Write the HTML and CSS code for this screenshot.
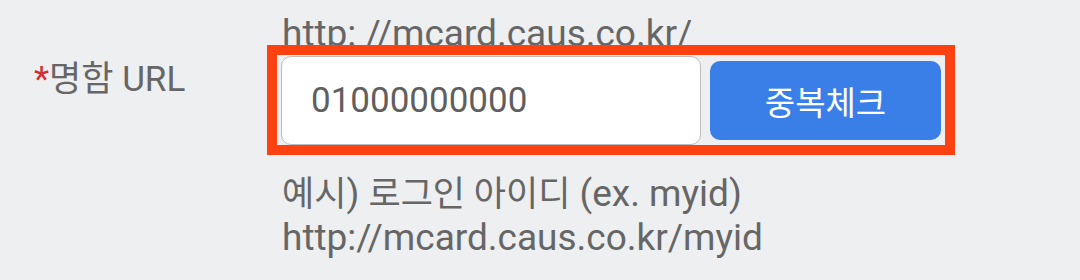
FILE: index.html
```html
<!DOCTYPE html>
<html lang="ko">
<head>
<meta charset="utf-8">
<link rel="stylesheet" href="styles.css">
</head>
<body>
<div class="form-row">
  <div class="label"><span class="req">*</span>명함 URL</div>
  <div class="field">
    <div class="prefix">http: //mcard.caus.co.kr/</div>
    <div class="highlight">
      <input class="url-input" type="text" value="01000000000">
      <button class="check-btn" type="button">중복체크</button>
    </div>
    <div class="hint">
      <div><span class="ko">예시</span>) <span class="ko">로그인 아이디</span> (ex. myid)</div>
      <div>http://mcard.caus.co.kr/myid</div>
    </div>
  </div>
</div>
</body>
</html>
```
FILE: styles.css
```css
html, body {
  margin: 0;
  padding: 0;
}
body {
  background: #eeeff1;
  font-family: Roboto, "Noto Sans CJK KR", sans-serif;
  color: #666666;
  width: 1080px;
  height: 280px;
  overflow: hidden;
}
.form-row {
  display: grid;
  grid-template-columns: 267px 688px;
}
.label {
  padding-left: 34px;
  padding-top: 60px;
  font-size: 35px;
  line-height: 40px;
  color: #666666;
  white-space: nowrap;
}
.req {
  color: #d32f2f;
}
.field {
  display: flex;
  flex-direction: column;
  padding-top: 22px;
}
.prefix {
  padding-left: 15px;
  font-size: 37px;
  line-height: 23px;
  color: #666666;
  white-space: nowrap;
}
.highlight {
  position: relative;
  box-sizing: border-box;
  width: 688px;
  border: 10px solid #fd4110;
  padding: 1px 4px 0 4px;
  display: flex;
  align-items: center;
  gap: 9px;
}
.url-input {
  box-sizing: border-box;
  width: 420px;
  height: 89px;
  margin: 0;
  border: 1px solid #bdbdbd;
  border-radius: 10px;
  background: #ffffff;
  padding: 0 0 0 29px;
  font-family: Roboto, "Noto Sans CJK KR", sans-serif;
  font-size: 35px;
  color: #5f5f5f;
  outline: none;
}
.check-btn {
  box-sizing: border-box;
  width: 231px;
  height: 79px;
  margin: 0;
  border: none;
  border-radius: 10px;
  background: #3a7fe8;
  color: #ffffff;
  font-family: Roboto, "Noto Sans CJK KR", sans-serif;
  font-size: 33px;
  padding: 0;
}
.hint {
  margin-top: 17px;
  padding-left: 15px;
  font-size: 37px;
  line-height: 43px;
  color: #666666;
  white-space: nowrap;
}
.ko {
  font-size: 35px;
}
```
